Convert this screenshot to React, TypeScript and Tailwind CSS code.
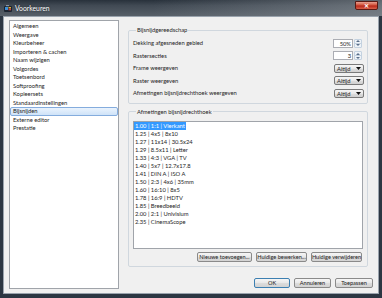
import React from "react";

const nav = [
  "Algemeen",
  "Weergave",
  "Kleurbeheer",
  "Importeren & cachen",
  "Naam wijzigen",
  "Volgordes",
  "Toetsenbord",
  "Softproofing",
  "Kopieersets",
  "Standaardinstellingen",
  "Bijsnijden",
  "Externe editor",
  "Prestatie",
];

const ratios = [
  "1.00 | 1:1 | Vierkant",
  "1.25 | 4x5 | 8x10",
  "1.27 | 11x14 | 30.5x24",
  "1.29 | 8.5x11 | Letter",
  "1.33 | 4:3 | VGA | TV",
  "1.40 | 5x7 | 12.7x17.8",
  "1.41 | DIN A | ISO A",
  "1.50 | 2:3 | 4x6 | 35mm",
  "1.60 | 16:10 | 8x5",
  "1.78 | 16:9 | HDTV",
  "1.85 | Breedbeeld",
  "2.00 | 2:1 | Univisium",
  "2.35 | CinemaScope",
];

function Btn({ w, children, def }: { w: string; children: React.ReactNode; def?: boolean }) {
  return (
    <div
      className={`${w} h-[10px] shrink-0 rounded-[2px] border ${
        def ? "border-[#3c7fb1]" : "border-[#8a8a8a]"
      } bg-[linear-gradient(#f6f6f6,#e8e8e8_50%,#dcdcdc_51%,#d2d2d2)] flex items-center justify-center leading-[8px] text-[5.6px] text-[#222] whitespace-nowrap`}
    >
      {children}
    </div>
  );
}

function Spin({ value }: { value: string }) {
  return (
    <div className="flex h-[9px] items-stretch mr-[2px]">
      <div className="w-[20px] border border-[#abadb3] bg-white text-right pr-[1px] leading-[7px] text-[5.8px]">
        {value}
      </div>
      <div className="w-[8px] ml-[1px] flex flex-col border border-[#c4d2e0] rounded-[1px] bg-[#eef3f8]">
        <div className="flex-1 flex items-center justify-center">
          <svg width="4" height="2" viewBox="0 0 4 2">
            <path d="M0 2 L2 0 L4 2 Z" fill="#5a6f8a" />
          </svg>
        </div>
        <div className="flex-1 flex items-center justify-center border-t border-[#c4d2e0]">
          <svg width="4" height="2" viewBox="0 0 4 2">
            <path d="M0 0 L2 2 L4 0 Z" fill="#5a6f8a" />
          </svg>
        </div>
      </div>
    </div>
  );
}

function Drop() {
  return (
    <div className="w-[30px] h-[9px] rounded-[2px] border border-[#7a7a7a] bg-[linear-gradient(#f6f6f6,#e8e8e8_50%,#dcdcdc_51%,#d0d0d0)] flex items-center justify-between pl-[2px] pr-[2px]">
      <span className="leading-[7px] text-[5.8px]">Altijd</span>
      <svg width="5" height="3" viewBox="0 0 5 3">
        <path d="M0 0 L5 0 L2.5 3 Z" fill="#111" />
      </svg>
    </div>
  );
}

function Row({ label, children }: { label: string; children: React.ReactNode }) {
  return (
    <div className="h-[12.5px] flex items-center justify-between">
      <span className="text-[5.8px] leading-[8px]">{label}</span>
      {children}
    </div>
  );
}

export default function App() {
  return (
    <div className="w-[382px] h-[298px] flex flex-col bg-[#2c3642] font-['Lato',sans-serif] text-[#1e1e1e] overflow-hidden">
      {/* title bar */}
      <div className="h-[16px] shrink-0 relative flex items-center bg-[linear-gradient(180deg,#28313b_0%,#414a54_35%,#575f68_100%)]">
        <div className="absolute inset-0 bg-[linear-gradient(90deg,rgba(0,0,0,0)_0%,rgba(0,0,0,0)_40%,rgba(150,156,162,0.5)_100%)]" />
        <svg className="relative ml-[4px]" width="8" height="7" viewBox="0 0 8 7">
          <rect x="0" y="1" width="8" height="6" rx="1" fill="#1b2430" />
          <rect x="1" y="2" width="3" height="3" fill="#3d8fd8" />
          <rect x="4.5" y="2" width="2.5" height="1.5" fill="#e0b030" />
          <rect x="4.5" y="3.8" width="2.5" height="1.5" fill="#d04040" />
          <rect x="2" y="0" width="3" height="1.2" fill="#8a96a4" />
        </svg>
        <span className="relative ml-[3px] text-[6.8px] leading-[8px] text-white [text-shadow:0_0_2px_rgba(0,0,0,0.6)]">
          Voorkeuren
        </span>
        <div className="absolute right-[4px] top-[1px] w-[23px] h-[9px] rounded-b-[2px] border border-[#5a1a14] bg-[linear-gradient(#e8a090,#d2533c_45%,#b8281a_55%,#d8604a)] flex items-center justify-center">
          <span className="text-[6px] leading-[6px] font-bold text-white">✕</span>
        </div>
      </div>

      {/* client */}
      <div className="flex-1 mx-[3px] mb-[4px] border border-[#9aa3ad] bg-[#f0f0f0] flex pt-[3px] pl-[5px] pr-[5px] pb-[4px]">
        {/* left list */}
        <div className="w-[110px] shrink-0 border border-[#a0a4aa] bg-white pt-[1px]">
          {nav.map((n) =>
            n === "Bijsnijden" ? (
              <div
                key={n}
                className="h-[8.5px] rounded-[2px] border border-[#84acdd] bg-[linear-gradient(#eaf3fd,#cfe3f8)] pl-[2px] text-[5.8px] leading-[6.5px]"
              >
                {n}
              </div>
            ) : (
              <div key={n} className="h-[8.5px] pl-[3px] text-[5.8px] leading-[8.5px]">
                {n}
              </div>
            )
          )}
        </div>

        {/* right column */}
        <div className="flex-1 ml-[9px] flex flex-col">
          <fieldset className="mt-[6px] mr-[5px] border border-[#d0d7de] rounded-[2px] pl-[4px] pr-[3px] pt-[3px] pb-[3px]">
            <legend className="ml-[3px] px-[1px] text-[5.8px] leading-[8px]">Bijsnijdgereedschap</legend>
            <Row label="Dekking afgesneden gebied">
              <Spin value="50%" />
            </Row>
            <Row label="Rastersecties">
              <Spin value="3" />
            </Row>
            <Row label="Frame weergeven">
              <Drop />
            </Row>
            <Row label="Raster weergeven">
              <Drop />
            </Row>
            <Row label="Afmetingen bijsnijdrechthoek weergeven">
              <Drop />
            </Row>
          </fieldset>

          <fieldset className="mt-[4px] mr-[5px] border border-[#d0d7de] rounded-[2px] pl-[4px] pr-[4px] pt-[5px] pb-[4px]">
            <legend className="ml-[3px] px-[1px] text-[5.8px] leading-[8px]">Afmetingen bijsnijdrechthoek</legend>
            <div className="h-[128px] border border-[#a0a4aa] bg-white">
              {ratios.map((r, i) =>
                i === 0 ? (
                  <div key={r} className="h-[8px] flex">
                    <span className="bg-[#3399ff] text-white px-[1px] text-[5.8px] leading-[8px]">{r}</span>
                  </div>
                ) : (
                  <div key={r} className="h-[8px] px-[1px] text-[5.8px] leading-[8px]">
                    {r}
                  </div>
                )
              )}
            </div>
            <div className="mt-[3px] flex justify-end gap-[4px] pr-[1px]">
              <Btn w="w-[55px]">Nieuwe toevoegen...</Btn>
              <Btn w="w-[51px]">Huidige bewerken...</Btn>
              <Btn w="w-[51px]">Huidige verwijderen</Btn>
            </div>
          </fieldset>

          <div className="mt-auto mb-[1px] flex justify-end gap-[4px]">
            <Btn w="w-[36px]" def>
              OK
            </Btn>
            <Btn w="w-[37px]">Annuleren</Btn>
            <Btn w="w-[38px]">Toepassen</Btn>
          </div>
        </div>
      </div>
    </div>
  );
}
